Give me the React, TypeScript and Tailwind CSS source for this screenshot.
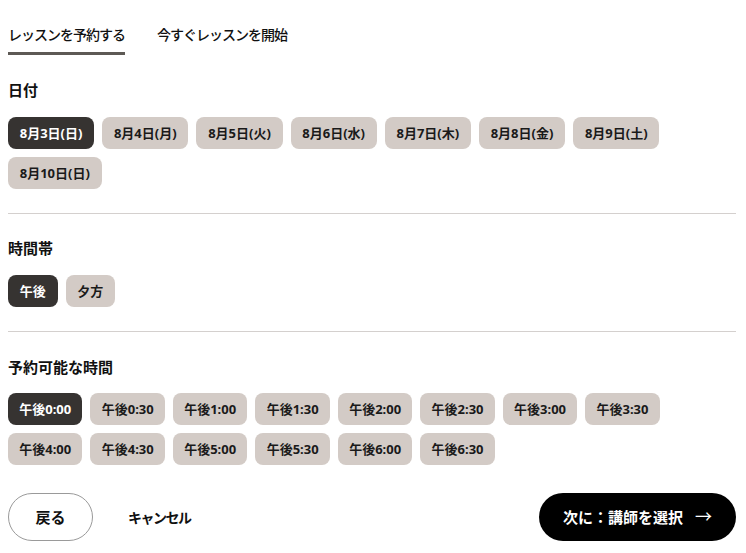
import { useState } from "react";

const dates = [
  "8月3日(日)",
  "8月4日(月)",
  "8月5日(火)",
  "8月6日(水)",
  "8月7日(木)",
  "8月8日(金)",
  "8月9日(土)",
  "8月10日(日)",
];

const periods = ["午後", "夕方"];

const times = [
  "午後0:00",
  "午後0:30",
  "午後1:00",
  "午後1:30",
  "午後2:00",
  "午後2:30",
  "午後3:00",
  "午後3:30",
  "午後4:00",
  "午後4:30",
  "午後5:00",
  "午後5:30",
  "午後6:00",
  "午後6:30",
];

function Chip({
  label,
  active,
  onClick,
  tight,
}: {
  label: string;
  active: boolean;
  onClick: () => void;
  tight?: boolean;
}) {
  return (
    <button
      onClick={onClick}
      className={`h-8 rounded-lg text-[13px] font-bold leading-none ${
        tight ? "px-[11.25px]" : "px-[11.75px]"
      } ${active ? "bg-[#363331] text-white" : "bg-[#d3cbc6] text-[#1a1a1a]"}`}
    >
      {label}
    </button>
  );
}

export default function App() {
  const [tab, setTab] = useState(0);
  const [date, setDate] = useState(dates[0]);
  const [period, setPeriod] = useState(periods[0]);
  const [time, setTime] = useState(times[0]);

  return (
    <div
      className="w-[746px] h-[553px] bg-white pl-2 pr-[10px] text-[#111]"
      style={{ fontFamily: '"Noto Sans", "Noto Sans CJK JP", sans-serif' }}
    >
      <div className="flex gap-8 pt-[25px]">
        {["レッスンを予約する", "今すぐレッスンを開始"].map((t, i) => (
          <button
            key={t}
            onClick={() => setTab(i)}
            className={`pb-[7px] text-[14px] tracking-[-1px] font-medium border-b-[3px] leading-[20px] ${
              tab === i ? "border-[#5d5955]" : "border-transparent"
            }`}
          >
            {t}
          </button>
        ))}
      </div>

      <h2 className="mt-[24px] text-[15px] font-bold leading-[22px]">日付</h2>
      <div className="mt-[16px] flex flex-wrap gap-2">
        {dates.map((d) => (
          <Chip key={d} label={d} active={date === d} onClick={() => setDate(d)} />
        ))}
      </div>

      <hr className="mt-6 border-[#d4d0ce]" />

      <h2 className="mt-[23px] text-[15px] font-bold leading-[22px]">時間帯</h2>
      <div className="mt-[16px] flex flex-wrap gap-2">
        {periods.map((p) => (
          <Chip key={p} label={p} active={period === p} onClick={() => setPeriod(p)} />
        ))}
      </div>

      <hr className="mt-6 border-[#d4d0ce]" />

      <h2 className="mt-[24px] text-[15px] font-bold leading-[22px]">予約可能な時間</h2>
      <div className="mt-[15px] flex flex-wrap gap-2">
        {times.map((t) => (
          <Chip key={t} label={t} tight active={time === t} onClick={() => setTime(t)} />
        ))}
      </div>

      <div className="mt-7 flex items-center">
        <button className="h-12 w-[85px] rounded-full border border-[#9a9a9a] text-[15px] font-bold">
          戻る
        </button>
        <button className="ml-[35px] text-[14px] tracking-[-1.5px] font-bold">キャンセル</button>
        <button className="ml-auto h-12 w-[197px] rounded-full bg-black text-white text-[15px] font-bold flex items-center justify-center gap-3">
          次に：講師を選択
          <span className="text-[17px] font-normal">→</span>
        </button>
      </div>
    </div>
  );
}
